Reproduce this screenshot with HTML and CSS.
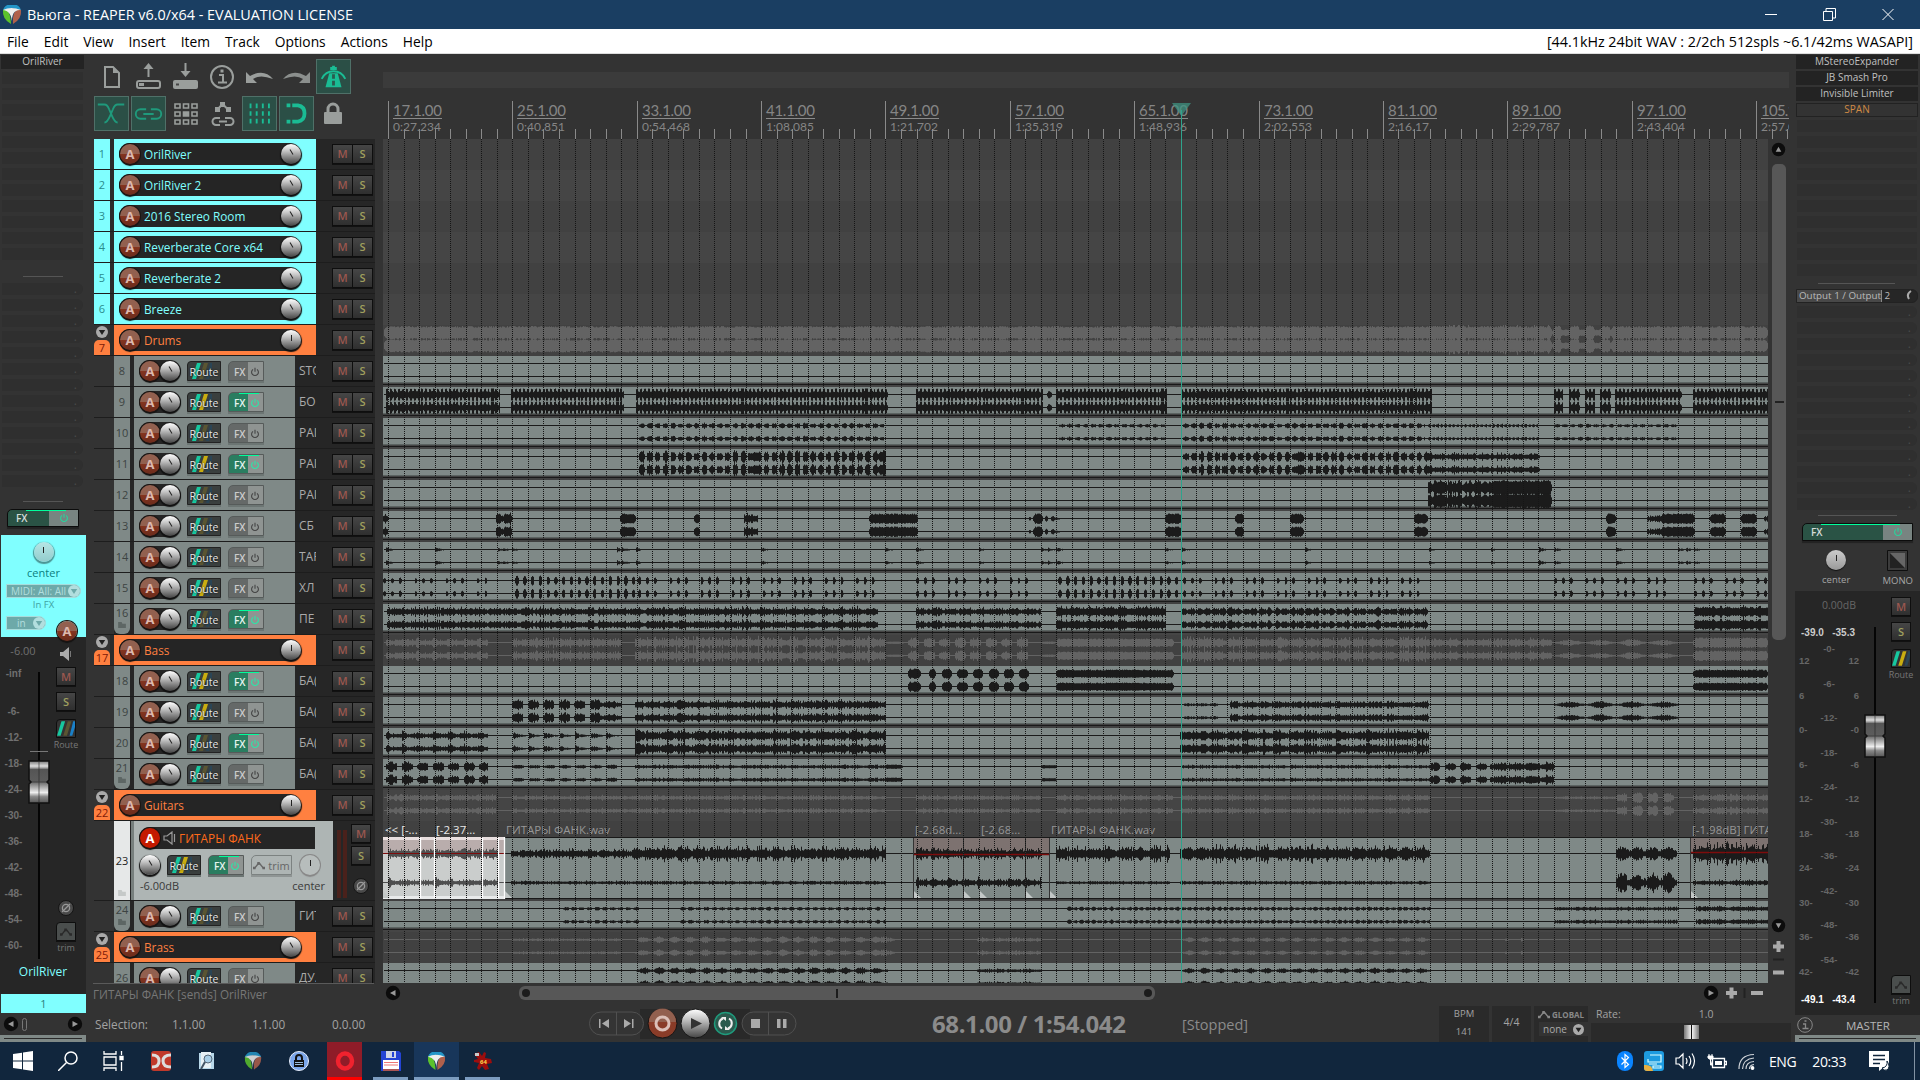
FILE: index.html
```
<!DOCTYPE html>
<html lang="en">
<head>
  <meta charset="UTF-8">
  <title>Вьюга - REAPER v6.0/x64 - EVALUATION LICENSE</title>
  <link rel="stylesheet" href="styles.css">
</head>
<body>
  <!-- Shared icons -->
  <svg class="defs" width="0" height="0">
    <defs>
      <linearGradient id="metal" x1="0" y1="0" x2="0" y2="1">
        <stop offset="0" stop-color="#777"/><stop offset=".12" stop-color="#ddd"/><stop offset=".17" stop-color="#999"/>
        <stop offset=".2" stop-color="#555"/><stop offset=".48" stop-color="#5c5c5c"/><stop offset=".56" stop-color="#888"/>
        <stop offset=".75" stop-color="#eee"/><stop offset=".85" stop-color="#888"/><stop offset="1" stop-color="#555"/>
      </linearGradient>
      <symbol id="fader" viewBox="0 0 24 46">
        <path d="M2 1h20v19l-2 2 2 2v19H2V24l2-2-2-2z" fill="url(#metal)" stroke="#111" stroke-width="1.5"/>
        <path d="M4 22h16M12 2v40" stroke="#222" stroke-width="1" opacity=".6"/>
      </symbol>
      <symbol id="power" viewBox="0 0 10 10">
        <path d="M3 2.4a3.4 3.4 0 1 0 4 0M5 .8v4" fill="none" stroke="currentColor" stroke-width="1.1"/>
      </symbol>
      <symbol id="stripes" viewBox="0 0 20 18">
        <path d="M5 1h4L4 17H0z" fill="#17c8a0"/><path class="s2" d="M12 1h4l-5 16H7z"/><path class="s3" d="M18 1h4l-5 16h-3z"/>
      </symbol>
      <symbol id="folder" viewBox="0 0 9 7"><path d="M0 0h4l1 2h4v5H0z" fill="currentColor"/></symbol>
      <symbol id="env" viewBox="0 0 14 10">
        <path d="M2 8l4-5 2 0 4 5" fill="none" stroke="currentColor" stroke-width="1.6"/>
        <path d="M0 6.5h3v3H0zM5 1h3v3H5zM11 6.5h3v3h-3z" fill="currentColor"/>
      </symbol>
      <symbol id="phase" viewBox="0 0 16 16">
        <circle cx="8" cy="8" r="7.5" fill="#4a4a4a" stroke="#151515"/>
        <circle cx="8" cy="8" r="3.6" fill="none" stroke="#999" stroke-width="1.3"/><path d="M4 12L12 4" stroke="#999" stroke-width="1.2"/>
      </symbol>
      <symbol id="arrow" viewBox="0 0 16 16">
        <circle cx="8" cy="8" r="7.2" fill="#0c0c0c"/><path d="M5 10.5h6L8 5z" fill="#999"/>
      </symbol>
      <symbol id="down" viewBox="0 0 12 12">
        <circle cx="6" cy="6" r="6" fill="currentColor"/><path class="tri" d="M2.8 4h6.4L6 9z"/>
      </symbol>
      <symbol id="reaper" viewBox="0 0 20 20">
        <path d="M1 6a9 7 0 0 1 18 0L10 3z" fill="#2496c8"/>
        <path d="M1 5q7-3 8 14Q0 14 1 5z" fill="#5cc22c"/>
        <path d="M19 5q-9-2-8 14 9-5 8-14z" fill="#b0604c"/>
        <path d="M1 5q8-4 18 0-10-1-9 14Q10 6 1 5z" fill="#eee"/>
      </symbol>
    </defs>
  </svg>

  <header class="titlebar">
    <svg width="20" height="20"><use href="#reaper"/></svg>
    <span class="title">Вьюга - REAPER v6.0/x64 - EVALUATION LICENSE</span>
    <svg class="winbuttons" width="130" height="15" fill="none" stroke="#fff">
      <path d="M0 7.5h12M58.5 4.5h9v9h-9zM61 4V1.5h9.5V11H68M117.5 2l11 11M128.5 2l-11 11"/>
    </svg>
  </header>

  <nav class="menubar">
    <a>File</a><a>Edit</a><a>View</a><a>Insert</a><a>Item</a><a>Track</a><a>Options</a><a>Actions</a><a>Help</a>
    <span class="audio">[44.1kHz 24bit WAV : 2/2ch 512spls ~6.1/42ms WASAPI]</span>
  </nav>

  <main class="workspace">
    <!-- Channel strip -->
    <aside class="strip">
      <div class="slot used">OrilRiver</div>
      <div id="leftFx" class="slots"></div>
      <hr>
      <div id="leftSends" class="slots sends"></div>
      <hr>
      <div class="fxbar"><b>FX</b><i><svg width="10" height="10"><use href="#power"/></svg></i></div>
      <div class="color-panel">
        <div class="knob flat"></div>
        <div class="pan">center</div>
        <div class="pill wide">MIDI: All: All<svg width="12" height="12"><use href="#down"/></svg></div>
        <div class="infx">In FX</div>
        <div class="pill">in<svg width="12" height="12"><use href="#down"/></svg></div>
        <div class="arm">A</div>
      </div>
      <div class="strip-body">
        <div class="scale" id="leftScale"><div class="db">-6.00</div><div class="inf">-inf</div></div>
        <svg class="fader-col" width="24" height="325">
          <path d="M12 35v287" stroke="#050505" stroke-width="2"/><path d="M3 114.5h18" stroke="#777"/>
          <use href="#fader" x="0" y="123" width="24" height="46"/>
        </svg>
        <div class="buttons">
          <svg width="14" height="14"><path d="M1 5h3l6-5v14L4 9H1z" fill="#aaa"/><path d="M11.5 4v6" stroke="#777"/></svg>
          <span class="btn m">M</span><span class="btn s">S</span>
          <svg class="routeicon blue" width="20" height="19"><use href="#stripes"/></svg>
          <small>Route</small>
          <svg class="phase" width="16" height="16"><use href="#phase"/></svg>
          <span class="btn trimbtn"><svg width="12" height="10"><use href="#env"/></svg></span>
          <small>trim</small>
        </div>
      </div>
      <div class="strip-name">OrilRiver</div>
      <div class="strip-num">1</div>
      <div class="strip-scroll">
        <svg width="16" height="16" class="left"><use href="#arrow"/></svg><i></i>
        <svg width="16" height="16" class="right"><use href="#arrow"/></svg>
      </div>
      <div class="strip-foot"></div>
    </aside>

    <section class="center">
      <div class="top">
        <div class="toolbar">
          <span><svg viewBox="0 0 35 35"><path d="M11 8h8l6 6v14H11z" fill="none" stroke="#9a9e9c" stroke-width="2"/><path d="M19 8v6h6z" fill="#9a9e9c"/></svg></span>
          <span><svg viewBox="0 0 35 35"><path d="M17.5 18V8" stroke="#9a9e9c" stroke-width="2"/><path d="M12.5 10h10l-5-6z" fill="#9a9e9c"/><rect x="6" y="22" width="23" height="7" rx="2" fill="none" stroke="#9a9e9c" stroke-width="2"/><path d="M8 25.5h5" stroke="#9a9e9c" stroke-width="3"/></svg></span>
          <span><svg viewBox="0 0 35 35"><path d="M17.5 4v11" stroke="#9a9e9c" stroke-width="2"/><path d="M12.5 12h10l-5 6z" fill="#9a9e9c"/><rect x="5" y="21" width="25" height="9" rx="2" fill="#9a9e9c"/><path d="M8 25.5h3" stroke="#444" stroke-width="2"/></svg></span>
          <span><svg viewBox="0 0 35 35"><circle cx="17" cy="18" r="11" fill="none" stroke="#9a9e9c" stroke-width="2"/><path d="M14 16h4v7M13 23.5h9" fill="none" stroke="#9a9e9c" stroke-width="2"/><rect x="15.5" y="10.5" width="3" height="3" fill="#9a9e9c"/></svg></span>
          <span><svg viewBox="0 0 35 35"><path d="M4 13v11h11l-4-4q7-5 20 0Q22 9 8 17z" fill="#9a9e9c"/></svg></span>
          <span><svg viewBox="0 0 35 35"><path d="M31 13v11H20l4-4q-7-5-20 0Q13 9 27 17z" fill="#8b8f8d"/></svg></span>
          <span class="on"><svg viewBox="0 0 35 35"><path d="M5 20q4-8 12.5-8T30 20" fill="none" stroke="#1abc94" stroke-width="2"/><path d="M13 14h9l4 15H9z" fill="#1abc94"/><path d="M14 9h7M17.5 6v3" stroke="#1abc94" stroke-width="3"/><path d="M17.5 15v14" stroke="#2b5a4e" stroke-width="3" stroke-dasharray="5 2"/></svg></span>
          <span class="on"><svg viewBox="0 0 35 35"><path d="M3 8h7q3 0 5 5l3 7q3 7 6 7M31 8h-7q-3 0-5 5l-3 7q-3 7-6 7" fill="none" stroke="#1f9a7c" stroke-width="2"/></svg></span>
          <span class="on"><svg viewBox="0 0 35 35"><path d="M15 13H9a5 5 0 0 0 0 10h6M20 13h6a5 5 0 0 1 0 10h-6M12 18h11" fill="none" stroke="#1f9a7c" stroke-width="2"/></svg></span>
          <span><svg viewBox="0 0 35 35" fill="none" stroke="#9a9e9c" stroke-width="1.6"><path d="M7 8h5v4H7zM15.5 8h5v4h-5zM24 8h5v4h-5zM7 16h5v4H7zM24 16h5v4h-5zM7 24h5v4H7zM15.5 24h5v4h-5zM24 24h5v4h-5z"/><path d="M15.5 16h5v4h-5z" fill="#9a9e9c"/></svg></span>
          <span><svg viewBox="0 0 35 35"><path d="M12 14l5.500-6 6 6" fill="none" stroke="#9a9e9c" stroke-width="2"/><path d="M10 11h5v5h-5zM15 6h5v5h-5zM21 11h5v5h-5z" fill="#9a9e9c"/><path d="M15 22h-4a3.500 3.500 0 0 0 0 7h4M20 22h5a3.500 3.500 0 0 1 0 7h-5M14 25.500h8" fill="none" stroke="#9a9e9c" stroke-width="2"/></svg></span>
          <span class="on"><svg viewBox="0 0 35 35"><path d="M8 7v22M14.500 7v22M21 7v22M27.500 7v22" stroke="#1abc94" stroke-width="2" stroke-dasharray="5 3"/></svg></span>
          <span class="on"><svg viewBox="0 0 35 35"><path d="M13 9h6q7 1 7 8.500T19 26h-6" fill="none" stroke="#1abc94" stroke-width="4"/><path d="M7 9h4M7 26h4" stroke="#1abc94" stroke-width="4"/></svg></span>
          <span><svg viewBox="0 0 35 35"><rect x="8" y="16" width="18" height="12" rx="1" fill="#9a9e9c"/><path d="M12 17v-4a5 5 0 0 1 10 0v4" fill="none" stroke="#9a9e9c" stroke-width="3"/></svg></span>
        </div>
        <div class="timeline">
          <div class="regionbar"></div>
          <svg id="ruler" width="1406" height="51" viewBox="383 88 1406 51"></svg>
        </div>
      </div>

      <div class="mid">
        <div class="tcp" id="tcp"></div>
        <div class="arrange">
          <div id="lanes"></div>
          <svg id="grid" width="1385" height="844" viewBox="383 139 1385 844"></svg>
        </div>
        <div class="vscroll">
          <svg width="15" height="15"><use href="#arrow"/></svg>
          <div class="vthumb"></div>
          <svg width="15" height="60" class="vzoom"><use href="#arrow" width="15" height="15" transform="rotate(180 7.5 7.5)"/>
            <path d="M2 28.500h11M7.500 23v11" stroke="#aaa" stroke-width="4"/><path d="M2 41.500h11" stroke="#222" stroke-width="2"/><path d="M2 54.500h11" stroke="#aaa" stroke-width="4"/></svg>
        </div>
      </div>

      <div class="bottom">
        <div class="status-row">
          <div class="status">ГИТАРЫ ФАНК [sends] OrilRiver</div>
          <div class="hscroll">
            <svg width="16" height="16" class="left"><use href="#arrow"/></svg>
            <div class="hthumb"><i></i><b></b><i></i></div>
            <svg width="16" height="16" class="right"><use href="#arrow"/></svg>
            <svg width="50" height="16"><path d="M2 8h11M7.500 2.500v11M27 8h12" stroke="#aaa" stroke-width="4"/><path d="M20.500 3v10" stroke="#222" stroke-width="2"/></svg>
          </div>
        </div>
        <div class="transport">
          <div class="selection"><span>Selection:</span><span>1.1.00</span><span>1.1.00</span><span>0.0.00</span></div>
          <svg class="tbuttons" width="210" height="36" viewBox="588 1007 210 36">
            <path d="M640 1010h110v30H640z" fill="#292929"/>
            <g fill="#343434" stroke="#505050"><rect x="589.5" y="1013" width="54" height="23" rx="11.5"/><rect x="742" y="1013" width="54" height="23" rx="11.5"/></g>
            <path d="M616.500 1013v23M768.500 1013v23" stroke="#505050"/>
            <path d="M599 1020h1.500v9H599zM609 1020v9l-7-4.500zM632 1020h1.500v9H632zM624 1020v9l7-4.500z" fill="#aaa"/>
            <circle cx="662.500" cy="1024.500" r="14.500" fill="#8a3c28" stroke="#151515"/><path d="M649 1023a13.500 13.500 0 0 1 27 0z" fill="#92604f"/>
            <circle cx="662.500" cy="1024.500" r="6.500" fill="none" stroke="#dcc0b8" stroke-width="3"/>
            <circle cx="695.500" cy="1024.500" r="14.500" fill="url(#ball)" stroke="#151515"/><path d="M691 1019v11l11-5.500z" fill="#333"/>
            <circle cx="725.500" cy="1024.500" r="11" fill="#2b5a4e" stroke="#1f9a7c" stroke-width="1.500"/>
            <path d="M722 1029.500a5.500 5.500 0 0 1 1-10M729 1019.500a5.500 5.500 0 0 1-1 10" fill="none" stroke="#eee" stroke-width="2"/><path d="M721 1018h5v4zM730 1031h-5v-4z" fill="#eee"/>
            <path d="M751 1020h9v9h-9zM777 1020h3.500v9H777zM783 1020h3.500v9H783z" fill="#aaa"/>
            <defs><linearGradient id="ball" x1="0" y1="0" x2="0" y2="1"><stop offset="0" stop-color="#fff"/><stop offset=".4" stop-color="#bbb"/><stop offset="1" stop-color="#444"/></linearGradient></defs>
          </svg>
          <div class="time">68.1.00 / 1:54.042</div>
          <div class="state">[Stopped]</div>
          <div class="box bpm"><small>BPM</small><span>141</span></div>
          <div class="box sig">4/4</div>
          <div class="box global"><small><svg width="12" height="9"><use href="#env"/></svg> GLOBAL</small><span>none <svg width="11" height="11"><use href="#down"/></svg></span></div>
          <div class="rate"><div><span>Rate:</span><span class="val">1.0</span></div><div class="ratebar"><i></i></div></div>
        </div>
      </div>
    </section>

    <!-- Master strip -->
    <aside class="master">
      <div class="slot used">MStereoExpander</div>
      <div class="slot used">JB Smash Pro</div>
      <div class="slot used">Invisible Limiter</div>
      <div class="slot used offline">SPAN</div>
      <div id="masterFx" class="slots"></div>
      <hr>
      <div class="output"><span>Output 1 / Output</span>&nbsp;2<svg width="8" height="10"><path d="M6 1q-5 3-2 8" fill="none" stroke="#aaa" stroke-width="2"/></svg></div>
      <div id="masterSends" class="slots sends"></div>
      <hr>
      <div class="fxbar"><b>FX</b><i><svg width="10" height="10"><use href="#power"/></svg></i></div>
      <div class="master-pan">
        <div><div class="knob grey"></div><small>center</small></div>
        <div><svg width="21" height="21"><path d="M.5.5h20v20H.5z" fill="#3c3c3c" stroke="#0e0e0e"/><path d="M3 3l15 15H3z" fill="#222"/><path d="M3 3h15v15z" fill="#666"/></svg><small>MONO</small></div>
      </div>
      <div class="master-body">
        <div class="meters">
          <div class="db">0.00dB</div>
          <div class="peaks"><b>-39.0</b><b>-35.3</b></div>
          <div class="cols"><div id="mL"></div><div id="mC"></div><div id="mR"></div></div>
          <div class="peaks white"><b>-49.1</b><b>-43.4</b></div>
        </div>
        <svg width="24" height="400" class="mfader"><path d="M12 24v376" stroke="#050505" stroke-width="2"/><use href="#fader" x="0" y="111" width="24" height="46"/></svg>
        <div class="buttons">
          <span class="btn m">M</span><span class="btn s">S</span>
          <svg class="routeicon gold" width="20" height="19"><use href="#stripes"/></svg>
          <small>Route</small>
          <span class="btn trimbtn"><svg width="12" height="10"><use href="#env"/></svg></span>
          <small>trim</small>
        </div>
      </div>
      <div class="master-name"><svg width="16" height="16" fill="none" stroke="#888"><circle cx="8" cy="8" r="7.300"/><path d="M6 7h2.500v4.500M5.500 11.500h6M7.500 4h2" stroke-width="1.300"/></svg><span>MASTER</span></div>
      <div class="strip-foot"></div>
    </aside>
  </main>

  <footer class="taskbar">
    <span class="task"><svg width="20" height="20"><path d="M0 3l9-1.200V9.500H0zM10 1.600L20 0v9.500H10zM0 10.500h9v7.700L0 17zM10 10.500h10V20l-10-1.600z" fill="#fff"/></svg></span>
    <span class="task"><svg width="20" height="20" fill="none" stroke="#fff" stroke-width="1.500"><circle cx="13" cy="7" r="6"/><path d="M8.500 11.500L0 20"/></svg></span>
    <span class="task view"><svg width="22" height="20" fill="none" stroke="#fff" stroke-width="1.300"><path d="M2 0v3h12V0M2 20v-3h12v3M2 6h12v8H2zM19.500 0v4M19.500 11v9"/><path d="M18 5.500h3v3h-3z" fill="#fff"/></svg></span>
    <span class="task"><svg width="20" height="20"><rect width="20" height="20" rx="3" fill="#c0392b"/><path d="M1 4q7 0 7 6t-7 6M20 4q-8 0-8 6t8 6" fill="none" stroke="#ddd" stroke-width="3"/></svg></span>
    <span class="task"><svg width="18" height="20"><path d="M1 2h15v16H1z" fill="#b8d8ea"/><path d="M3 1h10v16H3z" fill="#e8f1f6"/><circle cx="10" cy="8" r="4" fill="#a9cfe8" stroke="#567"/><path d="M7 11l-4 7" stroke="#456" stroke-width="2"/></svg></span>
    <span class="task"><svg width="18" height="19" opacity=".85"><use href="#reaper"/></svg></span>
    <span class="task"><svg width="20" height="20"><circle cx="10" cy="10" r="9.500" fill="#7ba6ea" stroke="#e8eefb"/><path d="M5 9h10v7H5z" fill="#111"/><path d="M7 9V7a3 3 0 0 1 6 0v2" fill="none" stroke="#111" stroke-width="2"/><path d="M6 11.500h8M6 13.500h8" stroke="#9bd"/></svg></span>
    <span class="task opera"><svg width="20" height="20"><ellipse cx="10" cy="10" rx="7" ry="7.500" fill="none" stroke="#f0222e" stroke-width="4.500"/></svg></span>
    <span class="task open"><svg width="20" height="20"><path d="M0 0h18l2 2v18H0z" fill="#2444d4"/><path d="M5 0h10v7H5z" fill="#cfd6e6"/><path d="M11 1h2v5h-2z" fill="#2444d4"/><path d="M2 9h16v10H2z" fill="#fff"/><path d="M3 11.500h14M3 14h14" stroke="#e77"/><path d="M2 18h16v2H2z" fill="#a55"/></svg></span>
    <span class="task open active"><svg width="19" height="19"><use href="#reaper"/></svg></span>
    <span class="task open"><svg width="20" height="20"><path d="M1 3l5-2 3 4 2-4 2 1-1 5 6 1 1 4-5 1 2 5-4 1-3-4-3 4-2-2 2-5-5-1V9l4-1z" fill="#9c0d0d"/><path d="M2 2h4v3H2z" fill="#ccc"/><text x="7" y="13" font-size="6" fill="#ffd54a" font-weight="bold">64</text></svg></span>
    <div class="tray">
      <svg width="16" height="20"><rect width="16" height="20" rx="8" fill="#0a84ff"/><path d="M4.500 6.500l7 7L8 16.500v-13l3.500 3-7 7" fill="none" stroke="#fff" stroke-width="1.200"/></svg>
      <svg width="20" height="20"><rect width="20" height="20" rx="3" fill="#1d9be0"/><path d="M0 14q8-1 9 6H3q-3 0-3-3z" fill="#e8b040"/><path d="M6 4h11v7H4V8M5 13h8M9 15h8v2H9z" fill="none" stroke="#dff" stroke-width="1.200"/></svg>
      <svg width="21" height="18" fill="none" stroke="#fff" stroke-width="1.200"><path d="M1 6h3l4-4v14l-4-4H1zM11 6q2 3 0 6M14 4q3.500 5 0 10M17 1.500q5 7.500 0 15"/></svg>
      <svg width="20" height="16"><path d="M5.500 5.500h12v9h-12zM18 8.500h1.500v3H18" fill="none" stroke="#fff" stroke-width="1.300"/><path d="M8 8h7v4H8z" fill="#fff"/><path d="M1 3h5v2q-2.500 3-5 0zM2 1v2M5 1v2M3.500 6v6h2" stroke="#fff" fill="#fff"/></svg>
      <svg width="17" height="17" fill="none" stroke="#fff" stroke-width="1.200"><path d="M1 16Q1 2 16 1.500M4.500 16Q5 6 16 5M8 16q0-7 8-7.500M11.500 16q0-4 4.500-4.500" opacity=".8"/><circle cx="14.500" cy="15" r="1.300" fill="#fff"/></svg>
      <span class="lang">ENG</span>
      <span class="clock">20:33</span>
      <svg width="22" height="20"><path d="M0 0h20v16h-5l-5 4v-4H0z" fill="#fff"/><path d="M4 4.500h12M4 8.500h12M4 12.500h7" stroke="#11263d" stroke-width="1.500"/><path d="M18 10q1 6-5 7 2 3 5 2 4-3 0-9z" fill="#fff" stroke="#11263d"/></svg>
      <i class="peek"></i>
    </div>
  </footer>

  <script src="script.js"></script>
</body>
</html>
```

FILE: styles.css
```
* {
  box-sizing: border-box;
}

body {
  margin: 0;
  width: 1920px;
  height: 1080px;
  overflow: hidden;
  display: flex;
  flex-direction: column;
  background: #333;
  color: #999;
  font-family: "Open Sans", "Noto Sans", sans-serif;
  font-size: 12px;
}

svg {
  display: block;
  flex: none;
}

.defs {
  position: absolute;
}

/* Title and menu */
.titlebar {
  height: 29px;
  background: #1a3e62;
  color: #fff;
  display: flex;
  align-items: center;
  padding-left: 2px;
}

.title {
  margin-left: 5px;
  font-size: 14.4px;
  flex: 1;
}

.winbuttons {
  margin-right: 25px;
}

.menubar {
  height: 25px;
  background: #fff;
  border-bottom: 1px solid #ddd;
  color: #000;
  display: flex;
  align-items: center;
  gap: 15px;
  padding: 0 7px;
  font-size: 13.8px;
}

.audio {
  margin-left: auto;
  font-size: 14.3px;
}

.workspace {
  height: 988px;
  display: flex;
}

/* Mixer strips */
.strip {
  width: 86px;
  padding-top: 1px;
  background: #333;
}

.slot {
  height: 14px;
  margin: 0 2px 2px 1px;
  background: #2f2f2f;
}

.slots .slot {
  height: 12px;
  margin: 0 3px 4px 2px;
}

.slots {
  padding-top: 1px;
}

.sends .slot {
  border-radius: 0 6px 6px 0;
  text-align: right;
  padding-right: 6px;
  line-height: 12px;
  color: #4a4a4a;
}

.slot.used {
  background: #232323;
  color: #c0c0c0;
  font-size: 10px;
  line-height: 13px;
  text-align: center;
}

.slot.offline {
  color: #d08a45;
  background: #333;
  border: 1px solid #222;
  line-height: 11px;
}

hr {
  border: 0;
  height: 1px;
  background: #555;
  margin: 16px 23px 5px;
}

.sends + hr {
  margin: 14px 23px 7px;
}

.fxbar {
  margin: 0 7px;
  height: 18px;
  border: 1px solid #0c0c0c;
  border-radius: 5px 0 0 0;
  background: #2a5345;
  color: #d5dcd9;
  font-size: 10px;
  display: flex;
  justify-content: space-between;
  align-items: center;
  padding-left: 8px;
  box-shadow: 0 2px 1px #222;
}

.fxbar b {
  font-weight: 600;
}

.fxbar::before {
  content: "";
  position: absolute;
  width: 40px;
  height: 1px;
  margin: -15px 0 0 10px;
  background: #00ff9c;
}

.fxbar i {
  width: 29px;
  height: 16px;
  background: #788481;
  color: #2ad39c;
  display: flex;
  align-items: center;
  justify-content: center;
}

.color-panel {
  margin: 8px 0 0 1px;
  height: 102px;
  background: #80ffff;
  padding-top: 7px;
  position: relative;
  z-index: 1;
  color: #0a8080;
  --t: #6da9a9;
}

.knob {
  width: 20px;
  height: 20px;
  border-radius: 50%;
  background: linear-gradient(#fff, #c4c4c4 35%, #444);
  box-shadow: 0 1px 1px 1px #111;
  flex: none;
}

.knob::before {
  content: "";
  display: block;
  width: 1px;
  height: 6px;
  margin: 0 auto;
  position: relative;
  top: 5px;
  background: #222;
  transform: rotate(-30deg);
}

.knob.up::before,
.knob.flat::before,
.knob.grey::before {
  transform: none;
}

.knob.flat {
  margin: 0 auto;
  background: linear-gradient(#b6e6e6, #92cccc);
  box-shadow: 0 1px 1px 1px #4b9595;
}

.knob.grey {
  background: linear-gradient(#ccc, #999);
  box-shadow: 0 1px 1px #111;
}

.pan {
  text-align: center;
  font-size: 11px;
  line-height: 16px;
  margin-top: 3px;
}

.pill {
  width: 40px;
  height: 14px;
  margin: 3px 0 0 5px;
  border-radius: 0 7px 7px 0;
  border: 1px solid #a8dcdc;
  background: #6da9a9;
  color: #b2dede;
  font-size: 10px;
  line-height: 11px;
  display: flex;
  justify-content: space-between;
  align-items: center;
  padding-left: 10px;
}

.pill.wide {
  width: 75px;
  padding-left: 4px;
  white-space: nowrap;
}

.infx {
  text-align: center;
  font-size: 9.5px;
  line-height: 13px;
  color: #3fa3a3;
}

.infx + .pill {
  margin-top: 5px;
}

.arm {
  width: 20px;
  height: 20px;
  border-radius: 50%;
  background: linear-gradient(#92604f 48%, #84341f 50%, #6b2c1c);
  box-shadow: 0 0 0 1px #1c1512, 0 2px 1px #111;
  color: #ddb8ae;
  font-weight: bold;
  font-size: 13px;
  line-height: 20px;
  text-align: center;
  flex: none;
}

.color-panel .arm {
  position: absolute;
  right: 9px;
  bottom: -4px;
}

.strip-body {
  height: 325px;
  background: #262626;
  display: flex;
}

.scale {
  width: 27px;
  color: #707070;
  font: bold 10px "Liberation Sans", sans-serif;
  text-align: center;
}

.scale div {
  height: 26px;
  line-height: 26px;
}

.scale .db {
  height: 24px;
  width: 46px;
  font: 11px/28px "Open Sans", sans-serif;
}

.scale .inf {
  height: 38px;
}

.buttons {
  display: flex;
  flex-direction: column;
  align-items: center;
  width: 30px;
  padding-top: 10px;
}

.btn {
  width: 20px;
  height: 19px;
  border: 1px solid #0e0e0e;
  background: linear-gradient(#464646, #2f2f2f);
  box-shadow: 0 1px 0 #111;
  font-size: 11px;
  font-weight: 600;
  line-height: 18px;
  text-align: center;
  flex: none;
}

.btn.m {
  color: #9b574f;
}

.btn.s {
  color: #a0a05e;
}

.buttons .btn {
  margin-top: 6px;
}

.buttons small {
  font-size: 9px;
  line-height: 14px;
  color: #777;
}

.routeicon {
  margin-top: 8px;
  background: #333;
  border: 1px solid #0e0e0e;
  border-radius: 4px 0 0 0;
}

.s2 {
  fill: var(--b, #5a5532);
}

.s3 {
  fill: var(--c, #2a4556);
}

.blue {
  --c: #1a80c8;
}

.gold {
  --b: #c9ad10;
}

.phase {
  margin-top: 148px;
}

.trimbtn {
  display: flex;
  align-items: center;
  justify-content: center;
  background: #4a4e4d;
  color: #2a2a2a;
  border-radius: 4px 0 0 0;
}

.strip-name {
  height: 32px;
  background: #262626;
  color: #80ffff;
  text-align: center;
  line-height: 20px;
}

.strip-num {
  height: 19px;
  margin-left: 1px;
  background: #80ffff;
  color: #2a7f80;
  font-size: 11px;
  line-height: 19px;
  text-align: center;
}

.strip-scroll {
  height: 22px;
  display: flex;
  align-items: center;
  padding: 0 3px;
}

.strip-scroll i {
  width: 5px;
  height: 13px;
  margin: 0 auto 0 3px;
  border-radius: 3px;
  border: 1px solid #777;
}

.left {
  transform: rotate(-90deg);
}

.right {
  transform: rotate(90deg);
}

.strip-foot {
  height: 7px;
  border: solid #7f8987;
  border-width: 3px 4px;
  background: #2a2a2a;
}

/* Toolbar and ruler */
.center {
  width: 1709px;
}

.top {
  height: 85px;
  display: flex;
}

.toolbar {
  width: 297px;
  padding: 5px 0 0 8px;
  display: flex;
  flex-wrap: wrap;
  gap: 2px;
  align-content: flex-start;
}

.toolbar span {
  width: 35px;
  height: 35px;
}

.toolbar .on {
  background: #2b4f46;
  border: 1px solid #4f7068;
}

.regionbar {
  width: 1406px;
  height: 16px;
  margin-top: 18px;
  background: #3b3b3b;
}

#ruler text {
  font-family: Lato, sans-serif;
  fill: #858585;
}

/* Track panel */
.mid {
  height: 844px;
  display: flex;
}

.tcp {
  width: 281px;
  margin: 0 8px;
  overflow: hidden;
  background: #262626;
}

.track {
  height: 31px;
  display: flex;
  border-bottom: 1px solid #1d1d1d;
  background: #262626;
}

.track .ms {
  display: flex;
  margin: 5px 0 0 17px;
}

.track .ms .btn {
  margin-left: -1px;
  width: 21px;
  height: 20px;
}

.num {
  width: 16px;
  font-size: 11px;
  line-height: 30px;
  text-align: center;
  background: #80ffff;
  color: #2a8c8c;
}

.num svg {
  margin: 0 auto;
}

.main-panel {
  width: 206px;
  border-left: 4px solid #2b2b2b;
  background: #80ffff;
  padding: 4px 15px 4px 5px;
}

.namebar {
  height: 22px;
  background: #252525;
  border-radius: 11px;
  display: flex;
  align-items: center;
  padding-left: 1px;
  color: #80ffff;
}

.namebar .label {
  flex: 1;
  margin-left: 4px;
  font-size: 11.8px;
  line-height: 20px;
}

.folder .num {
  background: #333;
  color: #aaa;
}

.folder .num svg {
  margin-top: 1px;
}

.folder .num b {
  display: block;
  margin-top: 2px;
  height: 15px;
  border-radius: 5px 5px 0 0;
  background: #ff8040;
  color: #7c1a08;
  font-weight: normal;
  line-height: 15px;
}

.folder .main-panel {
  background: #ff8040;
}

.folder .label {
  color: #ff8040;
}

.child::before,
.selected::before {
  content: "";
  width: 20px;
  background: #333;
}

.child .num {
  background: #7f8987;
  color: #3c4342;
  margin-right: 4px;
}

.child .num.last {
  line-height: 18px;
  border-radius: 0 0 6px 6px;
}

.num.last svg {
  color: #5d6664;
}

.child-panel {
  width: 161px;
  background: #7f8987;
  display: flex;
  padding: 4px 0 0 5px;
}

.knobs {
  display: flex;
  gap: 1px;
  width: 42px;
  height: 22px;
  border-radius: 11px;
  background: #252525;
  padding: 1px 0 0 1px;
}

.knobs .knob {
  margin-left: -1px;
}

.route {
  width: 34px;
  height: 20px;
  margin: 1px 0 0 6px;
  border: 1px solid #222;
  border-radius: 4px 0 0 0;
  background: #3a3f3e;
  box-shadow: 0 2px 0 #6c7573;
  position: relative;
  color: #e8e8e8;
  font-size: 10.5px;
  line-height: 21px;
  text-align: center;
  text-shadow: 0 0 2px #000;
}

.route svg {
  position: absolute;
  left: 4px;
  top: 0;
}

.route span {
  position: relative;
}

.fx {
  width: 36px;
  height: 20px;
  margin: 1px 0 0 7px;
  border: 1px solid #565b5a;
  border-radius: 5px 0 0 0;
  background: linear-gradient(90deg, #656968 55%, #8f9492 55%);
  box-shadow: 0 2px 0 #6c7573;
  color: #ccc;
  font-size: 10px;
  font-weight: 600;
  display: flex;
  justify-content: space-between;
  align-items: center;
  padding: 2px 3px 0 5px;
}

.fx svg {
  color: #444;
}

.fx.active {
  background: linear-gradient(#00ff9c, #00ff9c) 10px 0 / 20px 1px no-repeat, linear-gradient(90deg, #2a7d60 55%, #8f9492 55%);
  color: #e6f5ef;
}

.fx.active svg {
  color: #2ae8a8;
}

.cut {
  width: 17px;
  margin-left: 4px;
  overflow: hidden;
  white-space: nowrap;
  line-height: 30px;
  color: #aaa;
}

.child .ms {
  margin-left: 17px;
}

.selected {
  height: 80px;
}

.selected .num {
  background: #e6e8e8;
  line-height: 79px;
  color: #222;
  margin-right: 1px;
}

.selected .num svg {
  margin-top: -10px;
  color: #c5c9c8;
}

.sel-panel {
  width: 202px;
  background: #aeb5b4;
  border-left: 3px solid #777f7d;
  padding: 6px 0 0 5px;
  color: #3a3a3a;
  font-size: 11px;
}

.sel-name {
  height: 22px;
  width: 176px;
  background: #252525;
  border-radius: 11px 0 0 11px;
  display: flex;
  align-items: center;
  gap: 3px;
  padding-left: 1px;
  color: #ff6a1a;
  font-size: 11.8px;
}

.sel-name .arm {
  background: #c41a00;
  color: #fff;
}

.sel-row {
  display: flex;
  margin-top: 5px;
}

.sel-row .knob {
  margin: 1px;
}

.sel-row .flat {
  background: #b7bdbc;
  box-shadow: 0 0 0 1px #888, 0 2px 1px #888;
  margin-left: 8px;
}

.trim {
  width: 41px;
  height: 20px;
  margin: 1px 0 0 7px;
  border: 1px solid #7c8281;
  border-radius: 5px 0 0 0;
  display: flex;
  align-items: center;
  justify-content: center;
  gap: 3px;
  color: #666;
  box-shadow: 0 2px 0 #8f9594;
}

.sel-foot {
  display: flex;
  justify-content: space-between;
  padding: 2px 8px 0 1px;
}

.meter {
  width: 4px;
  height: 68px;
  margin: 9px 0 0 2px;
  background: #4a211b;
}

.meter:first-of-type {
  margin-left: 4px;
}

.side {
  width: 20px;
  margin-left: 4px;
  display: flex;
  flex-direction: column;
  align-items: center;
  gap: 3px;
  padding-top: 3px;
}

.side svg {
  margin-top: 10px;
}

/* Arrange view */
.arrange {
  width: 1385px;
  height: 844px;
  overflow: hidden;
  position: relative;
  background: #424242;
}

.lane {
  height: 31px;
  background: #414141;
}

.lane:nth-child(even) {
  background: #454545;
}

.lane.tall {
  height: 80px;
}

#grid {
  position: absolute;
  left: 0;
  top: 0;
}

.itemname {
  font-family: "Open Sans", sans-serif;
  font-size: 11.5px;
  fill: #969696;
}

.itemname.sel {
  fill: #e8e8e8;
}

.vscroll {
  width: 27px;
  padding: 3px 0 0 3px;
}

.vthumb {
  width: 14px;
  height: 476px;
  margin: 7px 0 278px 1px;
  border-radius: 5px;
  background: #575757;
  display: flex;
  align-items: center;
  justify-content: center;
}

.vthumb::after {
  content: "";
  width: 9px;
  height: 2px;
  background: #222;
}

/* Transport */
.status-row {
  height: 21px;
  display: flex;
}

.status {
  width: 281px;
  margin: 0 8px 0 7px;
  border-top: 1px solid #5a5a5a;
  color: #777;
  font-size: 11.7px;
  line-height: 20px;
}

.hscroll {
  display: flex;
  align-items: center;
  padding: 0 0 1px 3px;
}

.hthumb {
  width: 636px;
  height: 14px;
  margin: 0 548px 0 118px;
  background: #575757;
  border-radius: 6px;
  display: flex;
  justify-content: space-between;
  align-items: center;
  padding: 0 3px;
}

.hthumb i {
  width: 8px;
  height: 8px;
  border-radius: 50%;
  background: #1c1c1c;
}

.hthumb b {
  width: 2px;
  height: 9px;
  background: #1c1c1c;
}

.hscroll .right {
  margin-right: 5px;
}

.transport {
  height: 38px;
  padding-top: 2px;
  display: flex;
  align-items: center;
  color: #a2a2a2;
}

.selection {
  width: 502px;
  padding-left: 9px;
  display: grid;
  grid-template-columns: 77px 80px 80px 80px;
  font-size: 11.8px;
}

.transport .tbuttons {
  margin-right: 86px;
}

.time {
  width: 254px;
  padding-left: 48px;
  font-size: 24px;
  font-weight: bold;
  letter-spacing: -0.4px;
  line-height: 34px;
  color: #8b8b8b;
  white-space: nowrap;
}

.state {
  width: 301px;
  padding-left: 44px;
  font-size: 14.5px;
  color: #8b8b8b;
}

.box {
  height: 36px;
  margin: 0 3px 0 0;
  background: #2a2a2a;
  font-size: 10.5px;
  text-align: center;
}

.bpm {
  width: 50px;
}

.box small,
.box span {
  display: block;
  height: 18px;
  line-height: 15px;
  font-size: 9.5px;
}

.sig {
  width: 39px;
  line-height: 32px;
}

.global {
  width: 54px;
}

.global small,
.global span {
  display: flex;
  align-items: center;
  justify-content: center;
  gap: 2px;
  font-size: 8px;
  font-weight: bold;
  color: #888;
}

.global small {
  height: 16px;
}

.global span {
  gap: 6px;
  margin-left: 5px;
  height: 14px;
  background: #333;
  font-size: 10px;
  font-weight: normal;
  color: #aaa;
}

.tri {
  fill: var(--t, #222);
}

.rate {
  width: 200px;
  font-size: 10.5px;
}

.rate .val {
  margin-left: 78px;
}

.rate > div:first-child {
  height: 17px;
  padding-left: 5px;
  line-height: 16px;
}

.ratebar {
  height: 19px;
  background: #2a2a2a;
  padding: 2px 0 0 93px;
}

.ratebar i {
  display: block;
  width: 15px;
  height: 14px;
  background: linear-gradient(90deg, #777, #eee 45%, #111 46%, #111 54%, #eee 55%, #777);
}

/* Master */
.master {
  width: 125px;
  padding-top: 1px;
  background: #333;
}

.master hr {
  margin: 7px 25px 5px 23px;
}

.master .sends + hr {
  margin: 5px 23px 7px;
}

.output {
  height: 14px;
  margin: 0 2px 2px 1px;
  background: #262626;
  border-radius: 0 6px 6px 0;
  border: 1px solid #222;
  color: #bbb;
  font-size: 9.8px;
  line-height: 11px;
  display: flex;
}

.output span {
  background: #484848;
  padding-left: 2px;
  border-right: 1px solid #888;
  white-space: nowrap;
}

.output svg {
  margin-left: auto;
  margin-right: 4px;
}

.master .fxbar::before {
  width: 79px;
}

.master-pan {
  height: 50px;
  padding: 9px 7px 0 27px;
  display: flex;
  justify-content: space-between;
}

.master-pan > div {
  display: flex;
  flex-direction: column;
  align-items: center;
}

.master-pan small {
  font-size: 9.5px;
  line-height: 20px;
  color: #a5a5a5;
}

.master-body {
  height: 424px;
  background: #262626;
  display: flex;
}

.meters {
  width: 68px;
  padding-top: 5px;
  color: #666;
  font-family: "Liberation Sans", sans-serif;
}

.meters .db {
  margin-left: 27px;
  font: 10.5px/18px "Open Sans", sans-serif;
}

.peaks {
  display: flex;
  justify-content: space-between;
  padding: 0 8px 0 6px;
  margin-top: 11px;
  font-size: 10px;
  line-height: 16px;
  color: #ccc;
}

.peaks.white {
  color: #fff;
  margin-top: 22px;
}

.cols {
  display: flex;
  height: 329px;
  font-size: 9.5px;
  font-weight: bold;
  padding: 0 4px;
}

.cols div div {
  height: 34.5px;
  line-height: 16px;
}

#mL,
#mR {
  width: 18px;
  padding-top: 12px;
}

#mR {
  text-align: right;
}

#mC {
  width: 24px;
  text-align: center;
}

.mfader {
  margin-top: 12px;
}

.master-body .buttons {
  width: 28px;
  padding-top: 0;
}

.master-body .trimbtn {
  margin-top: 293px;
}

.master-name {
  height: 20px;
  display: flex;
  align-items: center;
  padding-left: 2px;
  color: #b5b5b5;
  font-size: 11.5px;
}

.master-name span {
  margin-left: 33px;
}

/* Taskbar */
.taskbar {
  height: 38px;
  background: #11263d;
  color: #fff;
  display: flex;
}

.task {
  width: 45px;
  margin-right: 1px;
  display: flex;
  align-items: center;
  justify-content: center;
  border-bottom: 3px solid transparent;
  padding-top: 3px;
}

.task:nth-child(-n+2) {
  margin-right: 0;
}

.task.view {
  margin-right: 3px;
}

.task.open {
  width: 35px;
  margin: 0 6px 0 5px;
  border-color: #7c9cc0;
}

.task.active {
  width: 45px;
  margin: 0 1px 0 0;
  background: #18365a;
}

.task.opera {
  width: 35px;
  margin: 0 6px 0 5px;
  background: #8f1c28;
  border-color: #f00;
}

.tray {
  margin-left: auto;
  display: flex;
  align-items: center;
  gap: 11px;
  font-size: 14px;
}

.clock {
  margin: 0 12px 0 5px;
  letter-spacing: -0.4px;
}

.lang {
  margin-left: 3px;
  letter-spacing: -0.4px;
}

.peek {
  width: 6px;
  height: 38px;
  margin-left: 12px;
  border-left: 1px solid #8292a3;
}
```

FILE: script.js
```
const X0 = 383, X1 = 1768;
const BAR = 15.545;       // pixels per measure
const FIRST = 388.5;      // x of measure 17

let seed = 7;
function rnd() {
  seed = (seed * 16807) % 2147483647;
  return seed / 2147483647;
}

const use = (id, w, h, cls = '') => `<svg class="${cls}" width="${w}" height="${h}"><use href="#${id}"/></svg>`;

// Segments: [from, to, shape, amplitude, pitch]
// n noise, s solid, b beats, d decaying hits, o blobs, t three hits of four
const q = BAR / 2;
const tracks = [
  { name: 'OrilRiver' }, { name: 'OrilRiver 2' }, { name: '2016 Stereo Room' },
  { name: 'Reverberate Core x64' }, { name: 'Reverberate 2' }, { name: 'Breeze' },
  { name: 'Drums', folder: 1, up: 1, w: [[384, 1552, 's', 6.5], [1430, 1552, 'n', 8], [1552, 1768, 's', 3], [1553, 1562, 's', 7], [1569, 1580, 's', 7], [1585, 1595, 's', 7], [1600, 1611, 's', 7], [1611, 1768, 's', 6.5]] },
  { name: 'STO', w: [] },
  { name: 'БО', gold: 1, fx: 1, w: [[386, 500, 'b', 6], [511, 624, 'b', 6], [636, 888, 'b', 6], [916, 1043, 'b', 6], [1047, 1052, 's', 4], [1056, 1167, 'b', 6], [1181, 1432, 'b', 6], [1554, 1563, 'b', 6], [1569, 1580, 'b', 6], [1585, 1595, 'b', 6], [1600, 1611, 'b', 6], [1615, 1682, 'b', 6], [1693, 1768, 'b', 6]] },
  { name: 'РАI', w: [[639, 884, 'o', 3, q], [1059, 1167, 'o', 2, q], [1183, 1425, 'o', 3.2, q], [1428, 1538, 'o', 2, 4], [1554, 1678, 'o', 1.8, q]] },
  { name: 'РАI', gold: 1, fx: 1, w: [[639, 886, 'o', 7, q], [752, 760, 's', 5], [878, 886, 's', 5], [1183, 1430, 'o', 6, q], [1296, 1304, 's', 5], [1425, 1540, 'n', 4]] },
  { name: 'РАI', w: [[1428, 1500, 'n', 8], [1428, 1500, 'o', 9, 5], [1490, 1552, 's', 7.5]] },
  { name: 'СБ', w: [[383, 388, 'n', 5], [496, 512, 'n', 6], [503, 512, 's', 5], [620, 636, 's', 5], [694, 700, 's', 5], [744, 758, 'n', 6], [869, 918, 's', 5], [1029, 1031, 's', 3], [1033, 1043, 's', 5], [1045, 1048, 's', 4], [1051, 1062, 'd', 5, 11], [1165, 1182, 's', 5], [1235, 1244, 's', 5], [1290, 1304, 's', 5], [1414, 1428, 's', 5], [1606, 1616, 's', 5], [1647, 1665, 'n', 4], [1661, 1695, 's', 5], [1710, 1726, 's', 5], [1741, 1757, 's', 5], [1764, 1768, 'n', 3]] },
  { name: 'ТАF', w: [386, 435, 498, 503, 512, 617, 622, 636, 761, 885, 916, 979, 1041, 1048, 1056, 1165, 1181, 1305, 1429, 1491, 1539, 1554, 1616, 1678, 1686, 1694].map(x => [x, x + 9, 'd', 2.8, 12]) },
  { name: 'ХЛ', gold: 1, w: [[383, 490, 't', 3, q], [515, 640, 'h', 5, q], [638, 880, 't', 4, q], [916, 1035, 't', 3.5, q], [1058, 1181, 'h', 5, q], [1183, 1425, 't', 3.5, q], [1554, 1670, 't', 3.5, q], [1694, 1768, 't', 3.5, q]] },
  { name: 'ПЕ', fx: 1, last: 1, w: [[387, 512, 'n', 5], [512, 878, 'n', 5], [916, 1041, 'n', 4.5], [1056, 1166, 'n', 6.5], [1056, 1166, 's', 3], [1181, 1428, 'o', 5, q], [1183, 1424, 'n', 3], [1694, 1768, 's', 4], [1694, 1768, 'o', 7.5, q]] },
  { name: 'Bass', folder: 1, up: 1, w: [[386, 488, 'd', 7, 15.5], [386, 488, 'n', 4], [512, 622, 'n', 5], [635, 886, 'n', 6.5], [886, 904, 's', 1], [908, 1030, 'o', 6, 15.5], [1041, 1056, 's', 1], [1056, 1174, 's', 4], [1181, 1430, 'n', 6], [1430, 1552, 'n', 5], [1554, 1680, 'w', 3.5, 31], [1693, 1768, 's', 5]] },
  { name: 'БА(', gold: 1, fx: 1, w: [[908, 921, 's', 5], [929, 936, 's', 5], [942, 952, 's', 5], [957, 968, 's', 5], [973, 983, 's', 5], [989, 999, 's', 5], [1004, 1014, 's', 5], [1019, 1029, 's', 5], [1056, 1174, 's', 4], [1693, 1768, 's', 4]] },
  { name: 'БА(', gold: 1, w: [[512, 622, 'o', 6, 15.5], [600, 622, 'n', 3], [635, 886, 'n', 5], [1184, 1218, 'n', 1.5], [1230, 1429, 'n', 4], [1554, 1679, 'w', 4, 31]] },
  { name: 'БА(', fx: 1, w: [[386, 488, 'd', 7, 15.5], [386, 488, 'n', 3], [513, 622, 'd', 5, 15.5], [635, 886, 'n', 6], [635, 886, 'd', 8, 31], [1180, 1429, 'n', 6], [1180, 1429, 'd', 8, 31]] },
  { name: 'БА(', last: 1, w: [[386, 488, 'o', 6, 15.5], [513, 622, 'o', 2, 15.5], [635, 884, 'n', 2], [884, 903, 's', 2], [1041, 1057, 's', 1.5], [1181, 1429, 'n', 1.8], [1429, 1490, 'o', 5, 15.5], [1490, 1554, 'n', 5]] },
  { name: 'Guitars', folder: 1, up: 1, w: [[387, 496, 'n', 3.5], [512, 886, 'n', 2.5], [916, 1041, 'n', 2.5], [1056, 1173, 'n', 3], [1181, 1430, 'n', 3], [1554, 1616, 'n', 1.5], [1616, 1678, 'o', 6, 15.5], [1693, 1768, 'n', 4]] },
  { name: 'ГИТАРЫ ФАНК', selected: 1,
    w: [[511, 640, 'n', 5], [632, 886, 'n', 8], [916, 1041, 'n', 6], [1056, 1170, 'n', 8], [1180, 1430, 'n', 9], [1616, 1677, 'o', 10, 15.5], [1616, 1677, 'n', 5], [1693, 1768, 'n', 12]],
    w2: [[511, 886, 'n', 2], [916, 1041, 'd', 8, 15.5], [916, 1041, 'n', 4], [1056, 1170, 'n', 1.8], [1180, 1430, 'n', 2], [1616, 1677, 'o', 11, 15.5], [1616, 1677, 'n', 5], [1693, 1768, 'n', 3]] },
  { name: 'ГИТ', last: 1, w: [[563, 640, 'o', 1.8, q], [680, 886, 'o', 2, q], [1067, 1430, 'o', 2.2, 6], [1554, 1678, 'n', 2], [1696, 1768, 'n', 3]] },
  { name: 'Brass', folder: 1, w: [[512, 622, 'n', 1.3], [635, 886, 'w', 3.5, 15.5], [881, 895, 'd', 7, 20], [977, 1041, 'n', 2], [1181, 1430, 'w', 2.5, 15.5], [1505, 1512, 'd', 2, 9], [1521, 1527, 'd', 2, 9]] },
  { name: 'ДУ.', w: [[636, 888, 'w', 4, 15.5], [977, 1041, 'n', 2], [1181, 1430, 'w', 3, 15.5]] }
];

let hit = -1, level = 1;

function peak(shape, x, from, to, amp, pitch) {
  const n = Math.floor((x - from) / pitch);
  const p = ((x - from) % pitch) / pitch;
  if (n !== hit) {
    hit = n;
    level = 0.7 + 0.3 * rnd();
  }
  switch (shape) {
    case 's': return amp * (0.75 + 0.25 * rnd()) * Math.min(1, (x - from + 1.5) / 3, (to - x + 0.5) / 3);
    case 'b': {
      const fill = (x - from + 16) % 124 > 120 ? 1 : 0;
      return amp * (fill || (Math.floor((x - from) * 2 / 3.886) % 2 ? 0.35 + 0.25 * rnd() : 0.85 + 0.15 * rnd()));
    }
    case 'd': return amp * level * Math.exp(-2.6 * p) * (0.35 + 0.65 * rnd());
    case 'o': return p < 0.7 ? amp * level * Math.sqrt(Math.sin(Math.PI * (p + 0.08) / 0.86)) * (0.5 + 0.5 * rnd()) : 0;
    case 'h': return p < 0.42 ? amp * level * Math.sin(Math.PI * (p + 0.1) / 0.6) : 0;
    case 't': return n % 4 !== 3 && p < 0.4 ? amp * level * Math.sin(Math.PI * (p + 0.1) / 0.5) : 0;
    case 'w': return amp * (0.2 + 0.8 * level * Math.pow(Math.sin(Math.PI * p), 2)) * (0.5 + 0.5 * rnd());
    default: return amp * (0.25 + 0.75 * rnd() * rnd() + 0.2 * Math.abs(Math.sin(x / 5)));
  }
}

function wave(segs, cy) {
  let d = '';
  for (const [a, b, shape, amp, pitch] of segs) {
    hit = -1;
    for (let x = a; x < b; x++) {
      const h = Math.max(0, peak(shape, x, a, b, amp, pitch || 8));
      if (h > 0.4) d += `M${x + 0.5} ${(cy - h).toFixed(1)}V${(cy + h + 0.5).toFixed(1)}`;
    }
  }
  return d;
}

// Lanes
function lane(t) {
  if (!t.w) return '<div class="lane"></div>';
  if (t.selected) return tallLane(t);
  const col = t.folder ? '#636363' : '#1b1b1b';
  let s = '';
  if (!t.folder) {
    s += '<rect x="383" y="0" width="1385" height="27" fill="#7f8987"/><rect x="383" y="26" width="1385" height="1" fill="#5b6361"/><rect x="383" y="28" width="1385" height="1" fill="#191919"/>';
  }
  s += `<path d="M384 7.500H1768M384 20.500H1768" stroke="${col}"/>`;
  const save = seed;
  s += `<path d="${wave(t.w, 7.5)}" stroke="${col}"/>`;
  seed = save;
  s += `<path d="${wave(t.w, 20.5)}" stroke="${col}"/>`;
  return `<div class="lane"><svg width="1385" height="31" viewBox="383 0 1385 31">${s}</svg></div>`;
}

function tallLane(t) {
  let s = '<rect x="383" y="16" width="1385" height="61" fill="#7f8987"/><path d="M383 16.500H1768M383 77.500H1768" stroke="#191919"/>';
  s += '<path d="M913 17h136v16H913zM1691 17h77v14h-77z" fill="#7d7270"/>';
  s += '<path d="M383 32.500H1768M383 61.500H1768" stroke="#1b1b1b"/>';
  s += `<path d="${wave(t.w, 32.5)}${wave(t.w2, 61.5)}" stroke="#1b1b1b"/>`;
  s += '<path d="M913 33.500h137M1691 31.500h77" stroke="#7d0c0c" stroke-width="1.500"/>';
  // selected items
  s += '<rect x="383" y="16" width="122" height="62" fill="#cacdcc"/><rect x="383" y="19" width="122" height="13" fill="#b9adac"/><rect x="383" y="16" width="122" height="3" fill="#e8dede"/><rect x="383" y="75" width="122" height="3" fill="#e8eaea"/>';
  s += `<path d="${wave([[388, 498, 'n', 6]], 32.5)}${wave([[388, 498, 'd', 7, 15.5], [388, 498, 'n', 3]], 61.5)}M383 61.500h122" stroke="#4f4f4f"/>`;
  s += '<path d="M383 32.500h122" stroke="#7d0c0c"/><path d="M420.500 17v60M434.500 17v60M482.500 17v60M498.500 17v60M504.500 16v62" stroke="#fff" stroke-width="1.300"/>';
  s += '<path d="M913.500 17v60M963.500 17v60M1025.500 17v60M1049.500 17v60M1690.500 17v60" stroke="#333"/>';
  s += [383, 505, 914, 964, 980, 1026, 1050, 1691].map(x => `<path d="M${x} 70l7 7h-7z" fill="#c3c8c7"/>`).join('');
  const names = [[385, '&lt;&lt; [-...', 1], [436, '[-2.37...', 1], [506, 'ГИТАРЫ ФАНК.wav'], [915, '[-2.68d...'], [981, '[-2.68...'], [1051, 'ГИТАРЫ ФАНК.wav'], [1692, '[-1.98dB] ГИТАРЫ']];
  s += names.map(([x, n, sel]) => `<text class="itemname${sel ? ' sel' : ''}" x="${x}" y="13">${n}</text>`).join('');
  return `<div class="lane tall"><svg width="1385" height="80" viewBox="383 0 1385 80">${s}</svg></div>`;
}

// Track panels
const ms = '<div class="ms"><span class="btn m">M</span><span class="btn s">S</span></div>';
const route = t => `<div class="route${t.gold ? ' gold' : ''}">${use('stripes', 20, 18)}<span>Route</span></div>`;
const fx = t => `<div class="fx${t.fx ? ' active' : ''}">FX${use('power', 10, 10)}</div>`;

function panel(t, i) {
  const n = i + 1;
  if (t.selected) {
    return `<div class="track selected"><div class="num">${n}${use('folder', 8, 6)}</div><div class="sel-panel">
      <div class="sel-name"><div class="arm">A</div><svg width="13" height="14"><path d="M1 5h3l5-4v12L4 9H1zM11.500 3v8" fill="none" stroke="#999" stroke-width="1.200"/></svg>${t.name}</div>
      <div class="sel-row"><div class="knob"></div>${route({ gold: 1 })}${fx({ fx: 1 })}<div class="trim">${use('env', 12, 9)}trim</div><div class="knob flat"></div></div>
      <div class="sel-foot"><span>-6.00dB</span><span>center</span></div></div>
      <i class="meter"></i><i class="meter"></i>
      <div class="side"><span class="btn m">M</span><span class="btn s">S</span>${use('phase', 16, 16)}</div></div>`;
  }
  if (t.w && !t.folder) {
    return `<div class="track child"><div class="num${t.last ? ' last' : ''}">${n}${t.last ? use('folder', 8, 6) : ''}</div>
      <div class="child-panel"><div class="knobs"><div class="arm">A</div><div class="knob"></div></div>${route(t)}${fx(t)}</div>
      <div class="cut">${t.name}</div>${ms}</div>`;
  }
  const num = t.folder ? `${use('down', 16, 12)}<b>${n}</b>` : n;
  return `<div class="track${t.folder ? ' folder' : ''}"><div class="num">${num}</div><div class="main-panel"><div class="namebar">
    <div class="arm">A</div><span class="label">${t.name}</span><div class="knob${t.up ? ' up' : ''}"></div></div></div>${ms}</div>`;
}

document.getElementById('tcp').innerHTML = tracks.map(panel).join('');
document.getElementById('lanes').innerHTML = tracks.map(lane).join('');

// Ruler and grid
const times = ['0:27.234', '0:40.851', '0:54.468', '1:08.085', '1:21.702', '1:35.319', '1:48.936', '2:02.553', '2:16.17', '2:29.787', '2:43.404', '2:57.021'];
let ruler = '', grid = '';
for (let i = 0; i <= 90; i++) {
  const x = Math.floor(FIRST + i * BAR) + 0.5;
  ruler += `<path d="M${x} ${i % 8 ? 129 : 101}V139" stroke="#8a8a8a"/>`;
  if (x < X1) grid += `M${x} 139V983`;
  if (i % 8 === 0) {
    ruler += `<text x="${x + 4.5}" y="116" font-size="15" textLength="${i === 88 ? 54 : 49}">${17 + i}.1.00</text>
      <path d="M${x + 4.5} 118.500h49" stroke="#8a8a8a"/><text x="${x + 4.5}" y="131" font-size="12" textLength="${i === 64 ? 41 : 48}">${times[i / 8]}</text>`;
  }
}
ruler += '<path d="M1172 103h19l-9.500 13z" fill="#3f9382" opacity=".75"/><path d="M1181.500 110V139" stroke="#2fa38c"/>';
document.getElementById('ruler').innerHTML = ruler;
document.getElementById('grid').innerHTML = `<path d="${grid}" stroke="#151515" stroke-dasharray="1 1"/><path d="M1181.500 139V983" stroke="#2fa38c"/>`;

// Mixer slots and scales
const fill = (id, n, text) => { document.getElementById(id).innerHTML = `<div class="slot">${text}</div>`.repeat(n); };
fill('leftFx', 12, '');
fill('leftSends', 13, '.');
fill('masterFx', 10, '');
fill('masterSends', 13, '.');

const rows = list => list.map(v => `<div>${v}</div>`).join('');
document.getElementById('leftScale').innerHTML += rows([6, 12, 18, 24, 30, 36, 42, 48, 54, 60].map(v => `-${v}-`));
document.getElementById('mL').innerHTML = rows(['12', '6', '0-', '6-', '12-', '18-', '24-', '30-', '36-', '42-']);
document.getElementById('mR').innerHTML = rows(['12', '6', '-0', '-6', '-12', '-18', '-24', '-30', '-36', '-42']);
document.getElementById('mC').innerHTML = rows([0, 6, 12, 18, 24, 30, 36, 42, 48, 54].map(v => `-${v}-`));
```
